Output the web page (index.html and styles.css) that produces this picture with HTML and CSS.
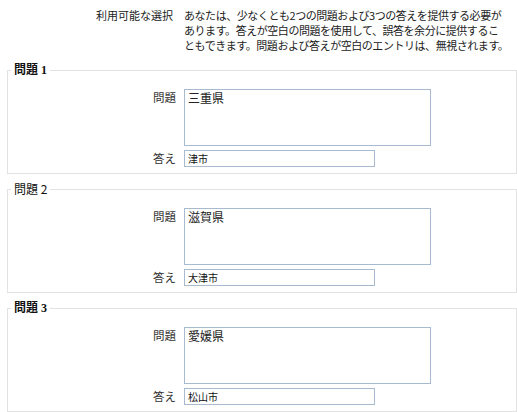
FILE: index.html
```html
<!DOCTYPE html>
<html lang="ja">
<head>
<meta charset="utf-8">
<link rel="stylesheet" href="styles.css">
</head>
<body>
<div class="intro">
  <div class="intro-label">利用可能な選択</div>
  <div class="intro-text">あなたは、少なくとも2つの問題および3つの答えを提供する必要が<br>あります。答えが空白の問題を使用して、誤答を余分に提供するこ<br>ともできます。問題および答えが空白のエントリは、無視されます。</div>
</div>

<fieldset class="qset">
  <legend class="qlegend bold">問題 1</legend>
  <div class="qgrid">
    <label class="qlabel">問題</label>
    <textarea class="qarea">三重県</textarea>
    <label class="qlabel alabel">答え</label>
    <input class="qinput" type="text" value="津市">
  </div>
</fieldset>

<fieldset class="qset">
  <legend class="qlegend">問題 2</legend>
  <div class="qgrid">
    <label class="qlabel">問題</label>
    <textarea class="qarea">滋賀県</textarea>
    <label class="qlabel alabel">答え</label>
    <input class="qinput" type="text" value="大津市">
  </div>
</fieldset>

<fieldset class="qset">
  <legend class="qlegend bold">問題 3</legend>
  <div class="qgrid">
    <label class="qlabel">問題</label>
    <textarea class="qarea">愛媛県</textarea>
    <label class="qlabel alabel">答え</label>
    <input class="qinput" type="text" value="松山市">
  </div>
</fieldset>
</body>
</html>
```

FILE: styles.css
```css
html, body {
  margin: 0;
  padding: 0;
  background: #fff;
}
body {
  font-family: "Noto Sans CJK JP", "DejaVu Sans", sans-serif;
  color: #222;
  font-size: 11px;
  width: 517px;
  overflow: hidden;
}
.intro {
  display: grid;
  grid-template-columns: 173px 1fr;
  column-gap: 11px;
  padding-top: 8px;
  line-height: 15px;
}
.intro-label {
  text-align: right;
  white-space: nowrap;
}
.intro-text {
  white-space: nowrap;
  letter-spacing: -0.45px;
}
.qset {
  margin: 0 0 8px 7px;
  padding: 0 0 6px 0;
  border: 1px solid #e2e2e2;
  min-width: 0;
}
.intro + .qset {
  margin-top: 10px;
}
.qlegend {
  margin-left: 3px;
  padding: 0 3px;
  font-size: 12px;
  line-height: 14px;
  color: #111;
}
.qlegend.bold {
  font-family: "Liberation Serif", "Noto Sans CJK JP", serif;
  font-weight: bold;
}
.qgrid {
  display: grid;
  grid-template-columns: 168px auto;
  column-gap: 8px;
  row-gap: 4px;
  justify-content: start;
  margin-top: 12px;
}
.qlabel {
  text-align: right;
  font-size: 11.5px;
  line-height: 15px;
  padding-top: 1px;
  color: #333;
}
.alabel {
  padding-top: 0;
  line-height: 17px;
}
.qarea {
  box-sizing: border-box;
  width: 247px;
  height: 57px;
  margin: 0;
  padding: 0 3px;
  border: 1px solid #a7bad0;
  font-family: "Noto Sans CJK JP", sans-serif;
  font-size: 12px;
  line-height: 15px;
  color: #222;
  resize: none;
  outline: none;
}
.qinput {
  box-sizing: border-box;
  width: 191px;
  height: 17px;
  margin: 0;
  padding: 0 3px;
  border: 1px solid #a7bad0;
  font-family: "Noto Sans CJK JP", sans-serif;
  font-size: 10px;
  color: #111;
  outline: none;
}
```
